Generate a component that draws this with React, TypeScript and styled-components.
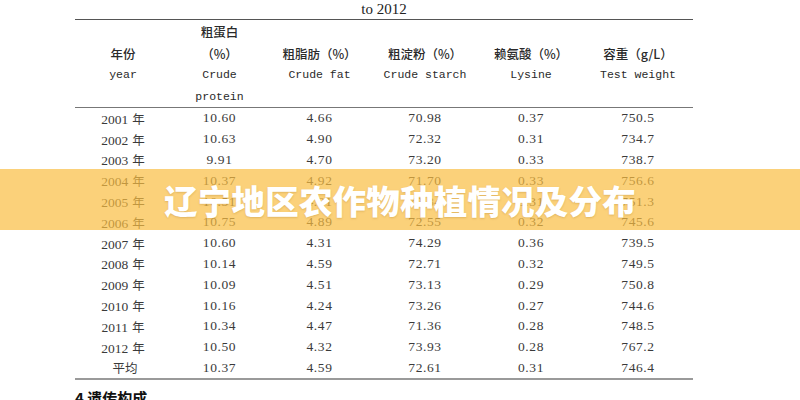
import React from "react";
import styled, { createGlobalStyle } from "styled-components";

const Global = createGlobalStyle`
  html, body { margin: 0; padding: 0; background: #fff; }
  body { width: 800px; height: 400px; overflow: hidden; position: relative; }
`;

const Page = styled.div`
  position: relative;
  width: 800px;
  height: 400px;
  overflow: hidden;
  background: #fff;
  color: #333;
`;

const Doc = styled.div`
  width: 618px;
  margin-left: 75px;
  display: flex;
  flex-direction: column;
`;

const Caption = styled.div`
  height: 19px;
  line-height: 18px;
  text-align: center;
  font-family: "Liberation Serif", serif;
  font-size: 15px;
  color: #222;
`;

const cols = "96px 97px 103px 108px 104px 110px";

const HeadRow = styled.div`
  display: grid;
  grid-template-columns: ${cols};
  border-top: 1.5px solid #555;
  border-bottom: 1px solid #777;
  height: 86px;
  padding-top: 1px;
`;

const HeadCell = styled.div`
  display: flex;
  flex-direction: column;
  align-items: center;
  justify-content: center;
`;

const HeadLine = styled.div<{ $mono?: boolean }>`
  height: 21.5px;
  line-height: 21.5px;
  white-space: nowrap;
  font-family: ${(p) =>
    p.$mono
      ? `"Liberation Mono", monospace`
      : `"Noto Sans CJK SC", "Liberation Serif", sans-serif`};
  font-size: ${(p) => (p.$mono ? "11.5px" : "12.5px")};
  font-weight: ${(p) => (p.$mono ? 400 : 500)};
  color: #2a2a2a;
`;

const Body = styled.div`
  display: flex;
  flex-direction: column;
  border-bottom: 2px solid #9a9a9a;
`;

const Row = styled.div`
  display: grid;
  grid-template-columns: ${cols};
  height: 20.8px;
  align-items: center;
`;

const Cell = styled.div`
  text-align: center;
  white-space: nowrap;
  font-family: "Liberation Serif", "Noto Sans CJK SC", serif;
  font-size: 13.5px;
  letter-spacing: 0.6px;
  color: #3a3a3a;
`;

const YearCell = styled(Cell)`
  letter-spacing: 0;
`;

const Han = styled.span`
  font-family: "Noto Sans CJK SC", sans-serif;
  font-size: 12.5px;
  margin-left: 4px;
`;

const Section = styled.div`
  margin-top: 8px;
  font-family: "Noto Sans CJK SC", "Liberation Sans", sans-serif;
  font-weight: 700;
  font-size: 15px;
  line-height: 20px;
  color: #111;
`;

const Banner = styled.div`
  position: absolute;
  left: 0;
  right: 0;
  top: 169px;
  height: 61px;
  background: rgba(249, 190, 65, 0.7);
  display: flex;
  align-items: center;
  justify-content: center;
`;

const BannerTitle = styled.div`
  font-family: "Noto Sans CJK SC", sans-serif;
  font-weight: 900;
  font-size: 33.5px;
  color: #fff;
  letter-spacing: 0.2px;
  text-shadow: 0 1px 2px rgba(150, 100, 20, 0.25);
`;

const rows: [string, string, string, string, string, string][] = [
  ["2001", "10.60", "4.66", "70.98", "0.37", "750.5"],
  ["2002", "10.63", "4.90", "72.32", "0.31", "734.7"],
  ["2003", "9.91", "4.70", "73.20", "0.33", "738.7"],
  ["2004", "10.37", "4.92", "71.70", "0.33", "756.6"],
  ["2005", "10.51", "4.81", "72.84", "0.31", "751.3"],
  ["2006", "10.75", "4.89", "72.55", "0.32", "745.6"],
  ["2007", "10.60", "4.31", "74.29", "0.36", "739.5"],
  ["2008", "10.14", "4.59", "72.71", "0.32", "749.5"],
  ["2009", "10.09", "4.51", "73.13", "0.29", "750.8"],
  ["2010", "10.16", "4.24", "73.26", "0.27", "744.6"],
  ["2011", "10.34", "4.47", "71.36", "0.28", "748.5"],
  ["2012", "10.50", "4.32", "73.93", "0.28", "767.2"],
];

const heads: { zh: string[]; en: string[] }[] = [
  { zh: ["年份"], en: ["year"] },
  { zh: ["粗蛋白", "（%）"], en: ["Crude", "protein"] },
  { zh: ["粗脂肪（%）"], en: ["Crude fat"] },
  { zh: ["粗淀粉（%）"], en: ["Crude starch"] },
  { zh: ["赖氨酸（%）"], en: ["Lysine"] },
  { zh: ["容重（g/L）"], en: ["Test weight"] },
];

export default function App() {
  return (
    <Page>
      <Global />
      <Doc>
        <Caption>to 2012</Caption>
        <HeadRow>
          {heads.map((h, i) => (
            <HeadCell key={i}>
              {h.zh.map((t) => (
                <HeadLine key={t}>{t}</HeadLine>
              ))}
              {h.en.map((t) => (
                <HeadLine key={t} $mono>
                  {t}
                </HeadLine>
              ))}
            </HeadCell>
          ))}
        </HeadRow>
        <Body>
          {rows.map((r) => (
            <Row key={r[0]}>
              <YearCell>
                {r[0]}
                <Han>年</Han>
              </YearCell>
              {r.slice(1).map((v, j) => (
                <Cell key={j}>{v}</Cell>
              ))}
            </Row>
          ))}
          <Row>
            <YearCell>
              <Han>平均</Han>
            </YearCell>
            <Cell>10.37</Cell>
            <Cell>4.59</Cell>
            <Cell>72.61</Cell>
            <Cell>0.31</Cell>
            <Cell>746.4</Cell>
          </Row>
        </Body>
        <Section>4 遗传构成</Section>
      </Doc>
      <Banner>
        <BannerTitle>辽宁地区农作物种植情况及分布</BannerTitle>
      </Banner>
    </Page>
  );
}
